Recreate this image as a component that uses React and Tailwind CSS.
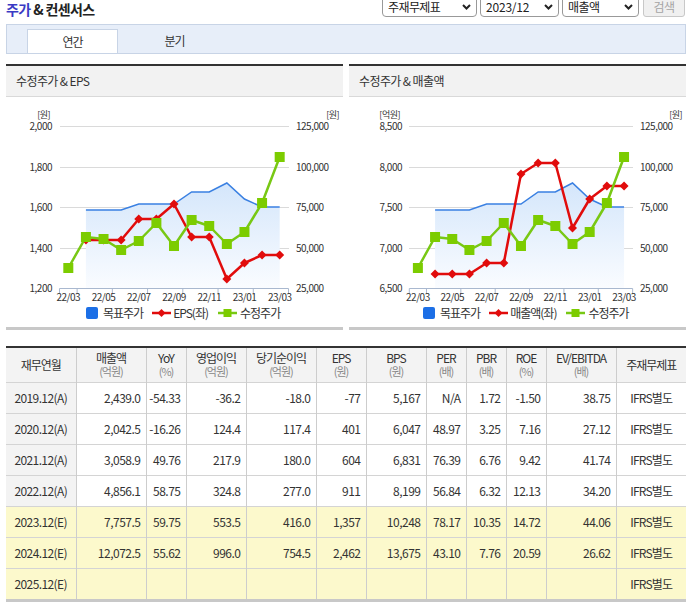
import React from 'react'

const GREEN = [171, 140, 142, 153, 144, 126, 149, 123, 129, 147, 135, 106, 60]
const BLUE = [null, 113, 113, 113, 107, 107, 107, 95, 95, 86, 102, 110, 110]
const RED_EPS = [null, 143, 143, 143, 122, 122, 107, 140, 140, 182, 166, 158, 158]
const RED_SALES = [null, 177, 177, 177, 166, 166, 77, 66, 66, 131, 102, 89, 89]
const X_LABELS = ['22/03', '22/05', '22/07', '22/09', '22/11', '23/01', '23/03']
const RIGHT_LABELS = ['125,000', '100,000', '75,000', '50,000', '25,000']

function Chevron() {
  return (
    <svg width="9" height="6" viewBox="0 0 9 6" className="shrink-0">
      <polyline points="1,1 4.5,4.5 8,1" fill="none" stroke="#222" strokeWidth="2" />
    </svg>
  )
}

function Chart({ id, x0, step, gridL, gridR, labelX, unit, unitX, leftLabels, red }) {
  const px = i => x0 + step * (i + 0.5)
  const ticks = [0, 1, 3, 5, 7, 9, 11, 13].map(k => x0 + step * k)
  const gridY = [29.5, 70.5, 110.5, 151.5, 191.5]
  const axisY = 191.5
  const pts = arr => arr.map((y, i) => (y == null ? null : `${px(i)},${y}`)).filter(Boolean).join(' ')
  const area = `${pts(BLUE)} ${px(12)},${axisY} ${px(1)},${axisY}`
  const txt = { fontSize: 10, letterSpacing: -0.5, fill: '#333' }

  return (
    <svg width="337" height="206" className="block">
      <defs>
        <linearGradient id={id} x1="0" y1="0" x2="0" y2="1">
          <stop offset="0" stopColor="#d4e6fb" />
          <stop offset="1" stopColor="#fafcff" />
        </linearGradient>
      </defs>
      {gridY.slice(0, 4).map(y => (
        <line key={y} x1={gridL} x2={gridR} y1={y} y2={y} stroke="#dadada" />
      ))}
      <polygon points={area} fill={`url(#${id})`} />
      <line x1={x0} x2={x0 + step * 13} y1={axisY} y2={axisY} stroke="#a9b8cf" />
      {ticks.map(t => (
        <line key={t} x1={t} x2={t} y1={axisY} y2={axisY + 5} stroke="#a9b8cf" />
      ))}
      <text x={unitX} y={19} textAnchor="end" dominantBaseline="middle" style={{ ...txt, fontSize: 9 }}>{unit}</text>
      <text x={333} y={19} textAnchor="end" dominantBaseline="middle" style={{ ...txt, fontSize: 9 }}>[원]</text>
      {leftLabels.map((l, i) => (
        <text key={l} x={labelX} y={gridY[i] + 1} textAnchor="end" dominantBaseline="middle" style={txt}>{l}</text>
      ))}
      {RIGHT_LABELS.map((l, i) => (
        <text key={l} x={gridR + 7} y={gridY[i] + 1} dominantBaseline="middle" style={txt}>{l}</text>
      ))}
      {X_LABELS.map((l, i) => (
        <text key={l} x={px(i * 2)} y={201} textAnchor="middle" dominantBaseline="middle" style={txt}>{l}</text>
      ))}

      <polyline points={pts(BLUE)} fill="none" stroke="#3a80e2" strokeWidth="1.5" />

      <polyline points={pts(red)} fill="none" stroke="#e10c0c" strokeWidth="2.5" strokeLinejoin="round" />
      {red.map((y, i) =>
        y == null ? null : (
          <polygon key={i} points={`${px(i)},${y - 4.5} ${px(i) + 4.5},${y} ${px(i)},${y + 4.5} ${px(i) - 4.5},${y}`} fill="#e10c0c" />
        )
      )}

      <polyline points={pts(GREEN)} fill="none" stroke="#78c814" strokeWidth="2.5" strokeLinejoin="round" />
      {GREEN.map((y, i) => (
        <rect key={i} x={px(i) - 5} y={y - 5} width="10" height="10" fill="#7ccc00" />
      ))}
    </svg>
  )
}

function Legend({ redLabel, pad }) {
  return (
    <div className={`flex h-[20px] items-center text-[12px] tracking-[-1px] text-[#333] ${pad}`}>
      <span className="h-[12px] w-[12px] rounded-[2px] bg-[#1c6fe6]" />
      <span className="ml-[5px]">목표주가</span>
      <svg width="19" height="10" className="ml-[9px]">
        <line x1="0" x2="19" y1="5" y2="5" stroke="#e10c0c" strokeWidth="2.5" />
        <polygon points="9.5,1 13.5,5 9.5,9 5.5,5" fill="#e10c0c" />
      </svg>
      <span className="ml-[2px]">{redLabel}</span>
      <svg width="19" height="10" className="ml-[10px]">
        <line x1="0" x2="19" y1="5" y2="5" stroke="#78c814" strokeWidth="2.5" />
        <rect x="5.5" y="1" width="8" height="8" fill="#7ccc00" />
      </svg>
      <span className="ml-[3px]">수정주가</span>
    </div>
  )
}

function Panel({ title, children, redLabel, pad }) {
  return (
    <div className="w-[337px] border-t-2 border-b-[3px] border-t-[#333] border-b-[#c8c8c8]">
      <div className="flex h-[31px] items-center border-b border-[#d9d9d9] bg-[#f2f2f2] pl-[10px] text-[12px] tracking-[-0.6px] text-[#333]">
        {title}
      </div>
      <div className="h-[230px]">
        {children}
        <Legend redLabel={redLabel} pad={pad} />
      </div>
    </div>
  )
}

const HEADERS = [
  ['재무연월'],
  ['매출액', '(억원)'],
  ['YoY', '(%)'],
  ['영업이익', '(억원)'],
  ['당기순이익', '(억원)'],
  ['EPS', '(원)'],
  ['BPS', '(원)'],
  ['PER', '(배)'],
  ['PBR', '(배)'],
  ['ROE', '(%)'],
  ['EV/EBITDA', '(배)'],
  ['주재무제표'],
]
const WIDTHS = ['w-[70px]', 'w-[70px]', 'w-[40px]', 'w-[60px]', 'w-[70px]', 'w-[50px]', 'w-[60px]', 'w-[40px]', 'w-[40px]', 'w-[40px]', 'w-[70px]', 'w-[70px]']

const ROWS = [
  ['2019.12(A)', '2,439.0', '-54.33', '-36.2', '-18.0', '-77', '5,167', 'N/A', '1.72', '-1.50', '38.75'],
  ['2020.12(A)', '2,042.5', '-16.26', '124.4', '117.4', '401', '6,047', '48.97', '3.25', '7.16', '27.12'],
  ['2021.12(A)', '3,058.9', '49.76', '217.9', '180.0', '604', '6,831', '76.39', '6.76', '9.42', '41.74'],
  ['2022.12(A)', '4,856.1', '58.75', '324.8', '277.0', '911', '8,199', '56.84', '6.32', '12.13', '34.20'],
  ['2023.12(E)', '7,757.5', '59.75', '553.5', '416.0', '1,357', '10,248', '78.17', '10.35', '14.72', '44.06'],
  ['2024.12(E)', '12,072.5', '55.62', '996.0', '754.5', '2,462', '13,675', '43.10', '7.76', '20.59', '26.62'],
  ['2025.12(E)', '', '', '', '', '', '', '', '', '', ''],
]

export default function App() {
  return (
    <div className="h-[605px] w-[692px] overflow-hidden bg-white font-['Noto_Sans_CJK_KR','Noto_Sans',sans-serif] text-[#333]">
      {/* title + search controls */}
      <div className="flex h-[24px] items-start justify-between pl-[6px] pr-[7px]">
        <div className="text-[14px] leading-[18px] font-bold tracking-[-0.6px] text-[#222]">
          <span className="text-[#3a3ac4]">주가</span> &amp; 컨센서스
        </div>
        <div className="-mt-[4px] flex gap-[3px] text-[12px] tracking-[-0.6px] text-[#222]">
          <div className="flex h-[21px] w-[95px] items-center justify-between rounded-[4px] border border-[#999] px-[5px]">
            <span>주재무제표</span>
            <Chevron />
          </div>
          <div className="flex h-[21px] w-[79px] items-center justify-between rounded-[4px] border border-[#999] px-[5px]">
            <span className="tracking-[-0.2px]">2023/12</span>
            <Chevron />
          </div>
          <div className="flex h-[21px] w-[77px] items-center justify-between rounded-[4px] border border-[#999] px-[5px]">
            <span>매출액</span>
            <Chevron />
          </div>
          <div className="ml-[1px] flex h-[21px] w-[42px] items-center justify-center rounded-[3px] border border-[#c8c8c8] bg-[#f0f0f0] text-[#a5a5a5]">
            검색
          </div>
        </div>
      </div>

      {/* tabs */}
      <div className="mx-[6px] flex h-[30px] items-end gap-[11px] border border-[#c8d4e6] bg-[#e7eef9] pl-[20px] text-[12px] tracking-[-1px]">
        <div className="flex h-[24px] w-[91px] items-center justify-center border border-b-0 border-[#c8d4e6] bg-white">연간</div>
        <div className="flex h-[24px] w-[91px] items-center justify-center">분기</div>
      </div>

      {/* charts */}
      <div className="mt-[10px] flex gap-[6px] px-[6px]">
        <Panel title="수정주가 & EPS" redLabel="EPS(좌)" pad="pl-[80px]">
          <Chart
            id="gl"
            x0={53.5}
            step={17.615}
            gridL={54}
            gridR={283}
            labelX={46}
            unit="[원]"
            unitX={44}
            leftLabels={['2,000', '1,800', '1,600', '1,400', '1,200']}
            red={RED_EPS}
          />
        </Panel>
        <Panel title="수정주가 & 매출액" redLabel="매출액(좌)" pad="pl-[74px]">
          <Chart
            id="gr"
            x0={60.3}
            step={17.18}
            gridL={60}
            gridR={284}
            labelX={53}
            unit="[억원]"
            unitX={51}
            leftLabels={['8,500', '8,000', '7,500', '7,000', '6,500']}
            red={RED_SALES}
          />
        </Panel>
      </div>

      {/* financial table */}
      <div className="mx-[6px] mt-[16px] border-t-2 border-b-[3px] border-t-[#333] border-b-[#c8c8c8]">
        <table className="w-[680px] table-fixed border-collapse text-[12px]">
          <thead>
            <tr className="border-b border-[#d4d4d4] bg-[#f3f3f3]">
              {HEADERS.map((h, i) => (
                <th key={i} className={`${WIDTHS[i]} h-[34px] border-r border-[#cdcdcd] p-0 text-center font-normal last:border-r-0`}>
                  <div className="leading-[13px] tracking-[-1px] text-[#333]">{h[0]}</div>
                  {h[1] && <div className="mt-[1px] text-[11px] leading-[13px] tracking-[-1px] text-[#888]">{h[1]}</div>}
                </th>
              ))}
            </tr>
          </thead>
          <tbody>
            {ROWS.map((r, ri) => {
              const est = r[0].includes('(E)')
              return (
                <tr key={ri} className={`border-b border-[#d4d4d4] last:border-b-0 ${est ? 'bg-[#fcf9cc]' : 'bg-white'}`}>
                  <td className={`h-[31px] border-r border-[#cdcdcd] p-0 text-center tracking-[-0.6px] ${est ? '' : 'bg-[#f3f3f3]'}`}>{r[0]}</td>
                  {r.slice(1).map((v, ci) => (
                    <td key={ci} className="h-[31px] border-r border-[#cdcdcd] p-0 pr-[5px] text-right tracking-[-0.5px]">{v}</td>
                  ))}
                  <td className="h-[31px] p-0 text-center tracking-[-0.8px]">IFRS별도</td>
                </tr>
              )
            })}
          </tbody>
        </table>
      </div>
    </div>
  )
}
